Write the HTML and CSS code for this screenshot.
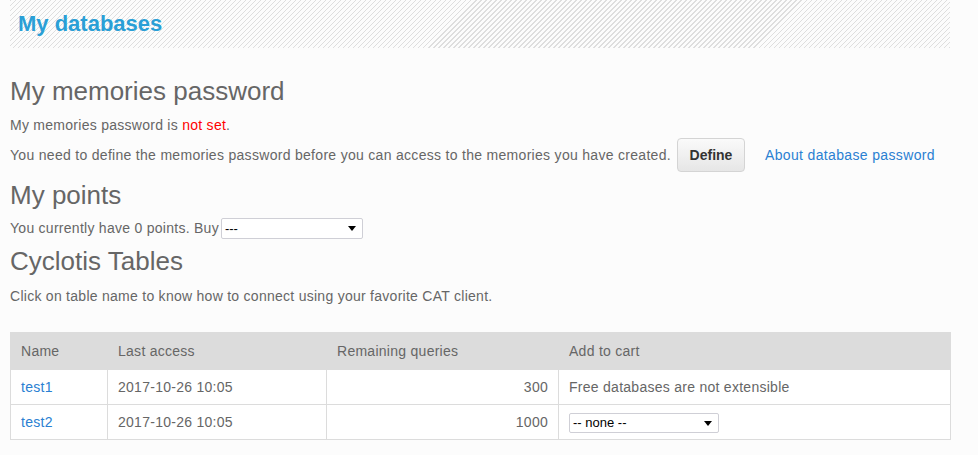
FILE: index.html
```html
<!DOCTYPE html>
<html>
<head>
<meta charset="utf-8">
<link rel="stylesheet" href="styles.css">
</head>
<body>
<div class="page">
  <div class="banner"><h1 class="title">My databases</h1></div>

  <h2 class="section first">My memories password</h2>
  <p class="line l1">My memories password is <span class="bad">not set</span>.</p>
  <div class="row define-row">
    <span class="long">You need to define the memories password before you can access to the memories you have created.</span>
    <button class="btn">Define</button>
    <a class="link about" href="#">About database password</a>
  </div>

  <h2 class="section">My points</h2>
  <div class="row points-row">
    <span>You currently have 0 points. Buy</span>
    <span class="sel sel-points"><select><option>---</option></select></span>
  </div>

  <h2 class="section">Cyclotis Tables</h2>
  <p class="line l3">Click on table name to know how to connect using your favorite CAT client.</p>

  <table class="tbl">
    <colgroup>
      <col class="c1"><col class="c2"><col class="c3"><col class="c4">
    </colgroup>
    <thead>
      <tr><th>Name</th><th>Last access</th><th>Remaining queries</th><th>Add to cart</th></tr>
    </thead>
    <tbody>
      <tr><td><a class="link" href="#">test1</a></td><td>2017-10-26 10:05</td><td class="num">300</td><td>Free databases are not extensible</td></tr>
      <tr><td><a class="link" href="#">test2</a></td><td>2017-10-26 10:05</td><td class="num">1000</td><td class="selcell"><span class="sel sel-cart"><select><option>-- none --</option></select></span></td></tr>
    </tbody>
  </table>
</div>
</body>
</html>
```

FILE: styles.css
```css
html, body {
  margin: 0;
  padding: 0;
  background: #fcfcfc;
}
body {
  font-family: "Liberation Sans", Arial, sans-serif;
  font-size: 14px;
  line-height: 20px;
  letter-spacing: 0.27px;
  color: #666;
}
.page {
  padding: 0 10px;
  width: 940px;
}
.banner {
  height: 48px;
  padding-left: 8px;
  background: repeating-linear-gradient(135deg, #dedede 0 1px, #fcfcfc 1px 3.54px);
}
.title {
  margin: 0;
  font-size: 22px;
  line-height: 48px;
  font-weight: bold;
  letter-spacing: 0;
  color: #2a9fd6;
}
.section {
  margin: 8px 0 0;
  font-size: 26px;
  line-height: 30px;
  font-weight: normal;
  letter-spacing: 0;
  color: #666;
}
.section.first {
  margin-top: 28px;
}
.line {
  margin: 0;
}
.l1 {
  margin-top: 9px;
}
.bad {
  color: #f00;
}
.row {
  display: flex;
  align-items: center;
}
.define-row {
  height: 34px;
  margin-top: 3px;
}
.long {
  letter-spacing: 0.3px;
}
.btn {
  margin-left: 6px;
  width: 68px;
  height: 34px;
  padding: 0;
  border: 1px solid #d4d4d4;
  border-radius: 4px;
  background: linear-gradient(#fafafa, #e6e6e6);
  font-family: "Liberation Sans", Arial, sans-serif;
  font-size: 14px;
  font-weight: bold;
  letter-spacing: 0;
  color: #333;
}
.link {
  color: #2a80d2;
  text-decoration: none;
}
.about {
  margin-left: 20px;
  letter-spacing: 0.35px;
}
.points-row {
  height: 20px;
  margin-top: 8px;
}
.sel {
  position: relative;
  display: inline-block;
}
.sel select {
  appearance: none;
  -webkit-appearance: none;
  display: block;
  box-sizing: border-box;
  margin: 0;
  padding: 0 0 0 3px;
  border: 1px solid #cfcfd6;
  border-radius: 2px;
  background: #fff;
  font-family: "Liberation Sans", Arial, sans-serif;
  font-size: 13px;
  letter-spacing: 0;
  color: #000;
}
.sel::after {
  content: "";
  position: absolute;
  right: 7px;
  top: 50%;
  margin-top: -2px;
  border-left: 4px solid transparent;
  border-right: 4px solid transparent;
  border-top: 5px solid #000;
  pointer-events: none;
}
.sel-points {
  margin-left: 2px;
}
.sel-points select {
  width: 142px;
  height: 21px;
}
.sel-cart select {
  width: 150px;
  height: 20px;
}
.l3 {
  margin-top: 10px;
}
.tbl {
  margin-top: 26px;
  width: 940px;
  table-layout: fixed;
  border-collapse: collapse;
  border: 1px solid #dcdcdc;
  background: #fff;
}
.c1 { width: 97px; }
.c2 { width: 219px; }
.c3 { width: 232px; }
.c4 { width: 392px; }
.tbl th {
  height: 37px;
  box-sizing: border-box;
  padding: 0 10px;
  background: #dcdcdc;
  font-weight: normal;
  text-align: left;
  color: #666;
  border: 1px solid #dcdcdc;
}
.tbl td {
  height: 35px;
  box-sizing: border-box;
  padding: 0 10px;
  border: 1px solid #dcdcdc;
  vertical-align: middle;
}
.tbl td.num {
  text-align: right;
}
.tbl td.selcell .sel {
  vertical-align: middle;
}
```
